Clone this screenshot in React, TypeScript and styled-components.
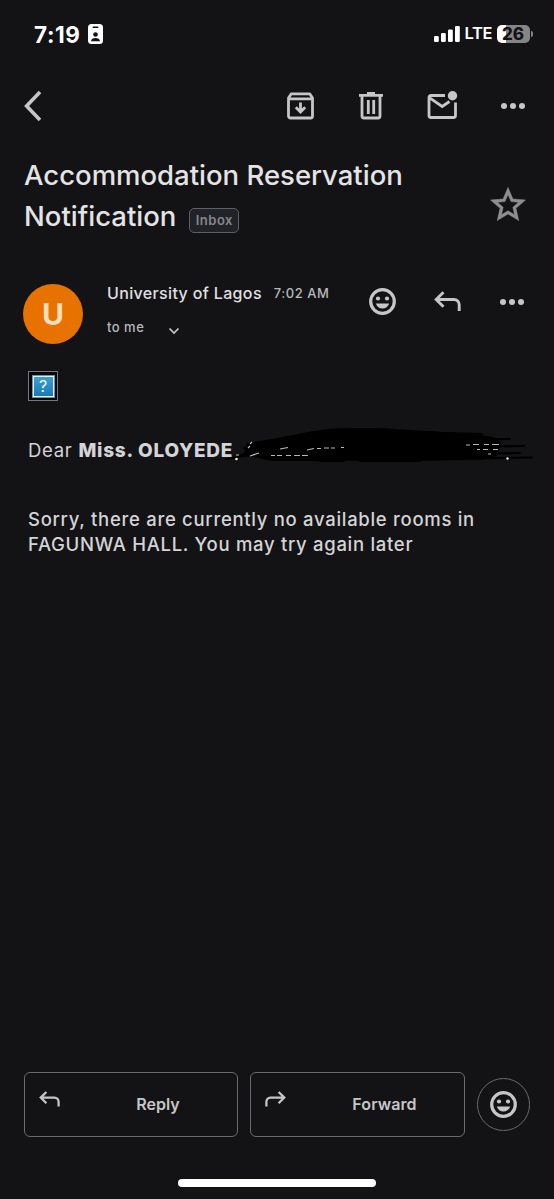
import React from 'react';
import styled, { createGlobalStyle } from 'styled-components';

const GlobalStyle = createGlobalStyle`
  * { box-sizing: border-box; }
  html, body { margin: 0; padding: 0; background: #131315; }
  body { font-family: Inter, "Liberation Sans", sans-serif; color: #d4d4d6; }
  button { font: inherit; color: inherit; background: none; border: 0; padding: 0; }
  svg { display: block; flex: none; }
`;

const Screen = styled.main`
  width: 554px;
  height: 1199px;
  display: flex;
  flex-direction: column;
  background: #131315;
  overflow: hidden;
`;

const StatusBar = styled.header`
  height: 68px;
  padding: 0 21px 0 34px;
  display: flex;
  justify-content: space-between;
  align-items: center;
  color: #fff;
`;

const StatusGroup = styled.div<{ $gap: number }>`
  display: flex;
  align-items: center;
  gap: ${p => p.$gap}px;
`;

const Text = styled.span<{ $size: number; $weight?: number; $track?: number; $color?: string }>`
  font-size: ${p => p.$size}px;
  font-weight: ${p => p.$weight ?? 400};
  letter-spacing: ${p => p.$track ?? 0}px;
  color: ${p => p.$color ?? 'inherit'};
  line-height: 1.2;
  white-space: nowrap;
`;

const Time = styled(Text)`
  width: 48px;
`;

const Battery = styled.div`
  width: 33px;
  height: 18px;
  border-radius: 5px;
  background: linear-gradient(90deg, #fff 0 9px, #858587 9px);
  display: flex;
  justify-content: center;
  align-items: center;
  color: #131315;
  span { line-height: 18px; margin-right: 1px; }
`;

const BatteryNub = styled.div`
  width: 2px;
  height: 6px;
  margin-left: 1px;
  border-radius: 0 2px 2px 0;
  background: #858587;
`;

const Toolbar = styled.nav`
  height: 76px;
  padding: 0 28px 0 24px;
  display: flex;
  align-items: center;
  justify-content: space-between;
  color: #c6c6c8;
`;

const ToolbarActions = styled.div`
  display: grid;
  grid-template-columns: 72px 68px 73px 26px;
  align-items: center;
`;

const IconButton = styled.button`
  display: block;
`;

const Subject = styled.section`
  height: 110px;
  padding: 11px 28px 0 24px;
  display: flex;
  justify-content: space-between;
`;

const Title = styled.h1`
  margin: 0;
  font-size: 27.5px;
  font-weight: 450;
  line-height: 41px;
  letter-spacing: 0;
  color: #e4e4e6;
  white-space: nowrap;
`;

const TitleRow = styled.div`
  display: flex;
  align-items: flex-start;
  gap: 13px;
`;

const Label = styled.span`
  width: 50px;
  height: 25px;
  margin-top: 12px;
  border: 1px solid #5e5f64;
  border-radius: 5px;
  background: #212227;
  display: grid;
  place-items: center;
`;

const StarButton = styled(IconButton)`
  align-self: flex-start;
  margin: 32px 0 0;
  color: #8e8e90;
`;

const MessageHead = styled.section`
  height: 117px;
  padding: 30px 28px 0 23px;
  display: flex;
`;

const Avatar = styled.div`
  width: 60px;
  height: 60px;
  border-radius: 50%;
  background: #e87200;
  display: grid;
  place-items: center;
`;

const Sender = styled.div`
  width: 245px;
  margin-left: 24px;
  display: flex;
  flex-direction: column;
  gap: 15px;
`;

const SenderLine = styled.div<{ $gap: number }>`
  display: flex;
  align-items: center;
  height: 19px;
  gap: ${p => p.$gap}px;
  svg { margin-top: 7px; }
`;

const HeadActions = styled.div`
  height: 35px;
  margin-left: 17px;
  display: grid;
  grid-template-columns: 65px 65px 26px;
  align-items: center;
  color: #c6c6c8;
`;

const Body = styled.article`
  flex: 1;
  padding: 0 28px;
  font-size: 18.5px;
  line-height: 25px;
`;

const MissingImage = styled.div`
  width: 30px;
  height: 30px;
  border: 1px solid #77787b;
  background: #05070c;
  display: grid;
  place-items: center;
`;

const MissingMark = styled.div`
  width: 23px;
  height: 23px;
  border: 2px solid #e5f2fa;
  outline: 1px solid #6b93ad;
  outline-offset: -1px;
  background: linear-gradient(#3ba0d4, #1c78b4);
  display: grid;
  place-items: center;
`;

const Greeting = styled.p`
  position: relative;
  margin: 37px 0 0;
  letter-spacing: 0.7px;
  white-space: nowrap;
  b { font-size: 19px; font-weight: 800; letter-spacing: 0.75px; }
`;

const Scribble = styled.svg`
  position: absolute;
  left: 192px;
  top: -10px;
`;

const Notice = styled.p`
  margin: 44px 0 0;
  font-weight: 500;
  letter-spacing: 0.7px;
  white-space: nowrap;
`;

const Footer = styled.footer`
  height: 107px;
  padding: 0 24px;
  display: flex;
  align-items: flex-start;
  gap: 12px;
  color: #c6c6c8;
`;

const ActionButton = styled.button<{ $width: number }>`
  width: ${p => p.$width}px;
  height: 65px;
  padding: 0 14px;
  border: 1px solid #6a6a6f;
  border-radius: 6px;
  display: grid;
  grid-template-columns: 22px 1fr;
  align-items: center;
  svg { margin-top: -10px; }
`;

const ActionLabel = styled(Text)`
  padding-left: 32px;
  text-align: center;
`;

const RoundButton = styled.button`
  width: 53px;
  height: 53px;
  margin-top: 6px;
  border: 1px solid #6a6a6f;
  border-radius: 50%;
  display: grid;
  place-items: center;
`;

const HomeIndicator = styled.div`
  width: 198px;
  height: 8px;
  margin: 0 auto 12px 178px;
  border-radius: 4px;
  background: #fff;
`;

const BadgeIcon = () => (
  <svg width="15" height="20" viewBox="0 0 15 20">
    <rect width="15" height="20" rx="3.5" fill="#fff" />
    <rect x="4.5" y="2.5" width="6" height="1.5" rx=".75" fill="#131315" />
    <circle cx="7.5" cy="10.5" r="2.3" fill="#131315" />
    <path d="M3 17.3c.2-2.2 2-3.2 4.5-3.2s4.3 1 4.5 3.2z" fill="#131315" />
  </svg>
);

const SignalIcon = () => (
  <svg width="26" height="16" viewBox="0 0 26 16" fill="#fff">
    <rect y="10" width="4.8" height="6" rx="1.3" />
    <rect x="7" y="7" width="4.8" height="9" rx="1.3" />
    <rect x="14" y="3.5" width="4.8" height="12.5" rx="1.3" />
    <rect x="21" width="4.8" height="16" rx="1.3" />
  </svg>
);

const BackIcon = () => (
  <svg width="18" height="32" viewBox="0 0 18 32" fill="none" stroke="currentColor" strokeWidth="3.6">
    <path d="M16 2 2.600 16 16 30" />
  </svg>
);

const ArchiveIcon = () => (
  <svg width="27" height="28" viewBox="0 0 27 28" fill="none" stroke="currentColor" strokeWidth="2.8">
    <path d="M1.500 6 4.300 1.800H22.700L25.500 6V24a2 2 0 0 1-2 2H3.500a2 2 0 0 1-2-2z" strokeLinejoin="round" />
    <path d="M1.500 6.800H25.500M13.500 10.500V20M8.800 15.300l4.700 4.700 4.700-4.700" />
  </svg>
);

const TrashIcon = () => (
  <svg width="24" height="28" viewBox="0 0 24 28" fill="none" stroke="currentColor" strokeWidth="2.8">
    <path d="M0 3.300H24M8 1.500H16M3 3.500V24a2 2 0 0 0 2 2H19a2 2 0 0 0 2-2V3.500M9.300 8V22M14.700 8V22" />
  </svg>
);

const MailIcon = () => (
  <svg width="31" height="30" viewBox="0 0 31 30" fill="none" stroke="currentColor" strokeWidth="2.8">
    <path d="M18 4.500H4a2 2 0 0 0-2 2V24.500a2 2 0 0 0 2 2H26.500a2 2 0 0 0 2-2V11.500M3 7.200l12.200 8.300 7.300-5" />
    <circle cx="25.500" cy="4.800" r="4.700" fill="currentColor" stroke="none" />
  </svg>
);

const MoreIcon = () => (
  <svg width="26" height="8" viewBox="0 0 26 8" fill="currentColor">
    <circle cx="4" cy="4" r="3" />
    <circle cx="13" cy="4" r="3" />
    <circle cx="22" cy="4" r="3" />
  </svg>
);

const StarIcon = () => (
  <svg width="36" height="34" viewBox="1.7 1.8 20.6 19.4" fill="currentColor" stroke="currentColor" strokeWidth=".3">
    <path d="M22 9.240l-7.190-.62L12 2 9.190 8.630 2 9.240l5.460 4.730L5.820 21 12 17.270 18.180 21l-1.630-7.030L22 9.240zM12 15.400l-3.760 2.270 1-4.280-3.320-2.880 4.380-.38L12 6.100l1.710 4.040 4.380.38-3.320 2.880 1 4.280L12 15.400z" />
  </svg>
);

const SmileIcon = () => (
  <svg width="27" height="27" viewBox="0 0 27 27" fill="currentColor">
    <circle cx="13.5" cy="13.5" r="11.8" fill="none" stroke="currentColor" strokeWidth="3.2" />
    <circle cx="9" cy="10.5" r="2.1" />
    <circle cx="18" cy="10.5" r="2.1" />
    <path d="M6.800 15.500H20.200c-1 3.100-3.500 5-6.700 5s-5.700-1.900-6.700-5z" />
  </svg>
);

const ReplyIcon = ({ width = 27, flip = false }: { width?: number; flip?: boolean }) => (
  <svg width={width} height={width * 21 / 27} viewBox="0 0 27 21" fill="none" stroke="currentColor" strokeWidth="2.9">
    <path transform={flip ? 'matrix(-1 0 0 1 27 0)' : undefined} d="M9.500 1.200 2.200 8.500l7.300 7.300M2.500 8.500H20a5.200 5.200 0 0 1 5.200 5.200V20" />
  </svg>
);

const ExpandIcon = () => (
  <svg width="12" height="8" viewBox="0 0 12 8" fill="none" stroke="#c6c6c8" strokeWidth="1.7">
    <path d="m1.500 1.500 4.500 4.500 4.500-4.500" />
  </svg>
);

const Redaction = () => (
  <Scribble width="320" height="42" viewBox="0 0 320 42" fill="none" stroke="#000" strokeLinecap="round" strokeLinejoin="round">
    <path d="M27 16 56 11 92 4 110 1.500 145 0.500 178 2 210 4 240 6 262 8 274 10 280 15 277 27 262 31 207 32 138 32 72 32 46 31 25 26z" fill="#000" strokeWidth="1.5" />
    <path d="M6 31 31 27 52 32 118 32M20 28 42 16 92 7M108 2 150 1.200 176 2M190 4 262 6M230 12 290 11M230 19 304 18M230 26 300 25M220 31 312 29.500M24 20 67 11M100 33h24M140 33h60" strokeWidth="2.2" />
    <g stroke="#b8b8ba" strokeWidth="1.200" strokeLinecap="butt">
      <path d="M16 27h3M30 16l2-2M28 20l2-2M30 28l9-3M51 27.500h4M57 27.500h5M66 27.500h5M74 27.500h6M82 27.500h6M60 21l8-1.500M87 22l7-1.500M97 20.500h4M104 20h5M111 20h4M121 19.500h3" />
      <path d="M246 17h4M253 16.500h6M264 16.500h5M272 16.500h7M257 21.500h3M263 21.500h5M273 21.500h5M268 26h3" strokeWidth="1" />
    </g>
    <circle cx="16.5" cy="31" r="1.3" fill="#eee" stroke="none" />
    <circle cx="287.5" cy="30.5" r="1.2" fill="#eee" stroke="none" />
  </Scribble>
);

export default function App() {
  return (
    <>
      <GlobalStyle />
      <Screen>
        <StatusBar>
          <StatusGroup $gap={6}>
            <Time $size={22.5} $weight={700} $track={0.6}>7:19</Time>
            <BadgeIcon />
          </StatusGroup>
          <StatusGroup $gap={5}>
            <SignalIcon />
            <Text $size={16.5} $weight={600} $track={-0.4}>LTE</Text>
            <StatusGroup $gap={0}>
              <Battery><Text $size={17} $weight={800}>26</Text></Battery>
              <BatteryNub />
            </StatusGroup>
          </StatusGroup>
        </StatusBar>
        <Toolbar>
          <IconButton aria-label="Back"><BackIcon /></IconButton>
          <ToolbarActions>
            <IconButton aria-label="Archive"><ArchiveIcon /></IconButton>
            <IconButton aria-label="Delete"><TrashIcon /></IconButton>
            <IconButton aria-label="Mark unread"><MailIcon /></IconButton>
            <IconButton aria-label="More"><MoreIcon /></IconButton>
          </ToolbarActions>
        </Toolbar>
        <Subject>
          <div>
            <Title>Accommodation Reservation</Title>
            <TitleRow>
              <Title as="div">Notification</Title>
              <Label><Text $size={13} $weight={600} $track={0.5} $color="#86878b">Inbox</Text></Label>
            </TitleRow>
          </div>
          <StarButton aria-label="Star"><StarIcon /></StarButton>
        </Subject>
        <MessageHead>
          <Avatar><Text $size={30} $weight={700} $color="#ffdcbb">U</Text></Avatar>
          <Sender>
            <SenderLine $gap={12}>
              <Text $size={16} $weight={500} $track={0.35} $color="#e0e0e2">University of Lagos</Text>
              <Text $size={13} $weight={500} $track={0.5} $color="#b8b8bb">7:02 AM</Text>
            </SenderLine>
            <SenderLine $gap={24}>
              <Text $size={13} $weight={500} $track={0.5} $color="#b8b8bb">to me</Text>
              <ExpandIcon />
            </SenderLine>
          </Sender>
          <HeadActions>
            <IconButton aria-label="React"><SmileIcon /></IconButton>
            <IconButton aria-label="Reply"><ReplyIcon /></IconButton>
            <IconButton aria-label="More"><MoreIcon /></IconButton>
          </HeadActions>
        </MessageHead>
        <Body>
          <MissingImage><MissingMark><Text $size={16} $color="#fff">?</Text></MissingMark></MissingImage>
          <Greeting>Dear <b>Miss. OLOYEDE</b><Redaction /></Greeting>
          <Notice>Sorry, there are currently no available rooms in<br />FAGUNWA HALL. You may try again later</Notice>
        </Body>
        <Footer>
          <ActionButton $width={214}><ReplyIcon width={21} /><ActionLabel $size={16} $weight={600}>Reply</ActionLabel></ActionButton>
          <ActionButton $width={215}><ReplyIcon width={21} flip /><ActionLabel $size={16} $weight={600} $track={0.1}>Forward</ActionLabel></ActionButton>
          <RoundButton aria-label="React"><SmileIcon /></RoundButton>
        </Footer>
        <HomeIndicator />
      </Screen>
    </>
  );
}
